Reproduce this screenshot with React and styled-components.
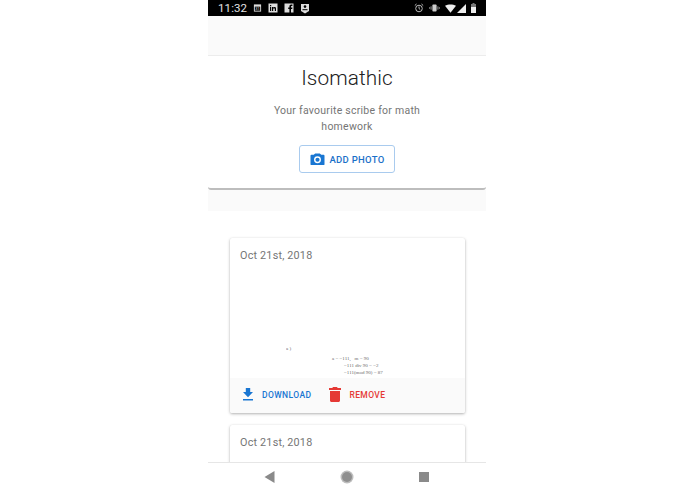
import React from 'react';
import styled, { createGlobalStyle } from 'styled-components';

const Global = createGlobalStyle`
  html, body { margin: 0; padding: 0; background: #fff; }
  body { font-family: Roboto, "Liberation Sans", sans-serif; }
`;
const Page = styled.div`display:flex;justify-content:flex-start;padding-left:208px;height:494px;overflow:hidden;`;
const Phone = styled.div`width:278px;height:494px;display:flex;flex-direction:column;background:#fff;`;
const StatusBar = styled.div`height:16px;flex:none;background:#000;display:flex;align-items:center;padding:0 10px;color:#e4e4e4;`;
const Clock = styled.span`font-size:11.5px;letter-spacing:.1px;width:35px;`;
const StatusLeft = styled.div`display:flex;gap:6px;align-items:center;flex:1;`;
const StatusRight = styled.div`display:flex;gap:5px;align-items:center;`;
const Main = styled.div`flex:1;min-height:0;overflow:hidden;display:flex;flex-direction:column;`;
const Band = styled.div`flex:none;background:#fafafa;height:${p=>p.$h}px;`;
const Hero = styled.section`flex:none;height:132px;background:#fff;border-top:1px solid #ececec;border-bottom:2px solid #bdbdbd;border-radius:0 0 3px 3px;display:flex;flex-direction:column;align-items:center;box-sizing:content-box;`;
const Title = styled.h1`margin:9px 0 0;font-weight:300;font-size:20.8px;line-height:27px;color:#212121;letter-spacing:.1px;`;
const Sub = styled.p`margin:11px 0 0;width:200px;text-align:center;font-size:10.5px;line-height:16px;color:#757575;letter-spacing:.25px;`;
const AddButton = styled.button`margin-top:10px;width:96px;height:28px;box-sizing:border-box;border:1px solid #a9cbee;border-radius:3px;background:#fff;color:#1a70c8;display:flex;align-items:center;justify-content:center;gap:4px;font:500 9.5px Roboto,sans-serif;letter-spacing:.3px;padding:0 0 0 1px;`;
const Cards = styled.div`padding:27px 21px 0 22px;display:flex;flex-direction:column;gap:12px;`;
const Card = styled.article`flex:none;background:#fff;border-radius:2px;box-shadow:0 1px 3px rgba(0,0,0,.3),0 0 1px rgba(0,0,0,.08);`;
const DateLine = styled.div`padding:11px 10px 0;height:21px;font-size:10.8px;line-height:14px;color:#757575;letter-spacing:.2px;`;
const Photo = styled.div`height:108px;display:flex;flex-direction:column;justify-content:flex-end;font-family:"Liberation Serif",serif;font-size:5px;line-height:7px;color:#444;opacity:.8;padding-bottom:2px;box-sizing:border-box;`;
const Mark = styled.div`padding-left:56px;margin-bottom:3px;`;
const Formula = styled.div`padding-left:${p=>p.$l}px;white-space:nowrap;`;
const Footer = styled.div`height:35px;background:#fafafa;display:flex;align-items:center;padding:0 0 2px 12px;box-sizing:border-box;border-radius:0 0 2px 2px;`;
const Action = styled.div`display:flex;align-items:center;font-weight:500;font-size:8.5px;letter-spacing:.4px;color:${p=>p.$c};gap:${p=>p.$g}px;margin-right:${p=>p.$m}px;`;
const Nav = styled.nav`flex:none;height:32px;background:#fff;border-top:1px solid #e6e6e6;box-sizing:border-box;display:flex;align-items:center;padding:0 2px 4px 0;justify-content:center;gap:65px;`;

const Cal = () => <svg width="9" height="10" viewBox="0 0 10 10"><path fill="#ddd" d="M1 1h8v8H1z"/><path fill="#000" d="M2 3.500h6V8H2z"/><text x="5" y="7.600" fontSize="4.500" fontFamily="Roboto" fill="#ddd" textAnchor="middle">31</text></svg>;
const In = () => <svg width="10" height="10" viewBox="0 0 10 10"><path fill="#ddd" d="M.5.5h9v9h-9z"/><path fill="#000" d="M2 4h1.200v4H2zM2 2h1.200v1.200H2zM4 4h1.200v.6c.6-.9 2.800-1 2.800 1V8H6.800V6c0-1-1.600-1-1.600 0v2H4z"/></svg>;
const Fb = () => <svg width="10" height="10" viewBox="0 0 10 10"><path fill="#ddd" d="M.5.5h9v9H7V6h1.200l.2-1.500H7V3.600c0-.5.200-.7.700-.7h.7V1.600H7.300C6 1.600 5.400 2.400 5.400 3.500v1H4.200V6h1.200v3.500H.5z"/></svg>;
const Msg = () => <svg width="10" height="11" viewBox="0 0 10 11"><path fill="#ddd" d="M1 1h8v7L5 10.500 1 8z"/><circle cx="5" cy="3.600" r="1.300" fill="#000"/><path fill="#000" d="M2.500 6.200h5v1H2.500z"/></svg>;
const Alarm = () => <svg width="10" height="10" viewBox="0 0 10 10" fill="none" stroke="#bbb"><circle cx="5" cy="5.500" r="3.300"/><path d="M5 3.500v2l1.200 1M.8 2.500 2.500 1M9.200 2.500 7.500 1"/></svg>;
const Vibrate = () => <svg width="11" height="10" viewBox="0 0 13 10"><rect x="4" y="1" width="5" height="8" rx="1" fill="#ccc"/><path fill="none" stroke="#aaa" d="M2.500 3v4M10.500 3v4M.8 4v2M12.200 4v2"/></svg>;
const Wifi = () => <svg width="11" height="9" viewBox="0 0 12 9"><path fill="#eee" d="M0 1.500C3.500-.5 8.500-.5 12 1.500L6 9z"/></svg>;
const Signal = () => <svg width="9" height="9" viewBox="0 0 9 9" style={{marginLeft:-4}}><path fill="#eee" d="M9 0v9H0z"/></svg>;
const Battery = () => <svg width="5" height="10" viewBox="0 0 5 10"><path fill="#777" d="M1.500 0h2v1H5v3H0V1h1.500z"/><path fill="#eee" d="M0 4h5v6H0z"/></svg>;
const Camera = () => <svg width="15" height="14" viewBox="0 0 16 15"><path fill="#1976d2" d="M5.500 1.500h5L12 3h2.500c.6 0 1 .4 1 1v9c0 .6-.4 1-1 1h-13c-.6 0-1-.4-1-1V4c0-.6.4-1 1-1H4z"/><circle cx="8" cy="8.300" r="3.700" fill="#fff"/><circle cx="8" cy="8.300" r="2.200" fill="#1976d2"/></svg>;
const Download = () => <svg width="12" height="13" viewBox="0 0 12 13"><path fill="#1976d2" d="M3.800 0h4.400v4H11L6 9.200 1 4h2.800zM1 11h10v1.500H1z"/></svg>;
const Trash = () => <svg width="12" height="15" viewBox="0 0 12 15"><path fill="#e53935" d="M4 0h4l.7 1H12v2H0V1h3.300zM1 4h10v9.500c0 .8-.7 1.500-1.500 1.500h-7C1.700 15 1 14.300 1 13.500z"/></svg>;
const Back = () => <svg width="11" height="12" viewBox="0 0 11 12"><path fill="#8a8a8a" d="M10.500 0v12L.5 6z"/></svg>;
const Home = () => <svg width="14" height="14" viewBox="0 0 14 14"><circle cx="7" cy="7" r="6.500" fill="#bdbdbd"/><circle cx="7" cy="7" r="5" fill="#8f8f8f"/></svg>;
const Square = () => <svg width="10" height="10" viewBox="0 0 10 10"><path fill="#8a8a8a" d="M0 0h10v10H0z"/></svg>;

export default function App() {
  return (
    <Page>
      <Global />
      <Phone>
        <StatusBar>
          <Clock>11:32</Clock>
          <StatusLeft><Cal /><In /><Fb /><Msg /></StatusLeft>
          <StatusRight><Alarm /><Vibrate /><Wifi /><Signal /><Battery /></StatusRight>
        </StatusBar>
        <Main>
          <Band $h={39} />
          <Hero>
            <Title>Isomathic</Title>
            <Sub>Your favourite scribe for math homework</Sub>
            <AddButton><Camera />ADD PHOTO</AddButton>
          </Hero>
          <Band $h={21} />
          <Cards>
            <Card>
              <DateLine>Oct 21st, 2018</DateLine>
              <Photo>
                <Mark>a )</Mark>
                <Formula $l={102}>a = −111,&nbsp;&nbsp; m = 90</Formula>
                <Formula $l={114}>−111 div 90 = −2</Formula>
                <Formula $l={114}>−111(mod 90) = 87</Formula>
              </Photo>
              <Footer>
                <Action $c="#1976d2" $g={8} $m={18}><Download />DOWNLOAD</Action>
                <Action $c="#e53935" $g={8} $m={0}><Trash />REMOVE</Action>
              </Footer>
            </Card>
            <Card>
              <DateLine>Oct 21st, 2018</DateLine>
              <Photo />
            </Card>
          </Cards>
        </Main>
        <Nav><Back /><Home /><Square /></Nav>
      </Phone>
    </Page>
  );
}
